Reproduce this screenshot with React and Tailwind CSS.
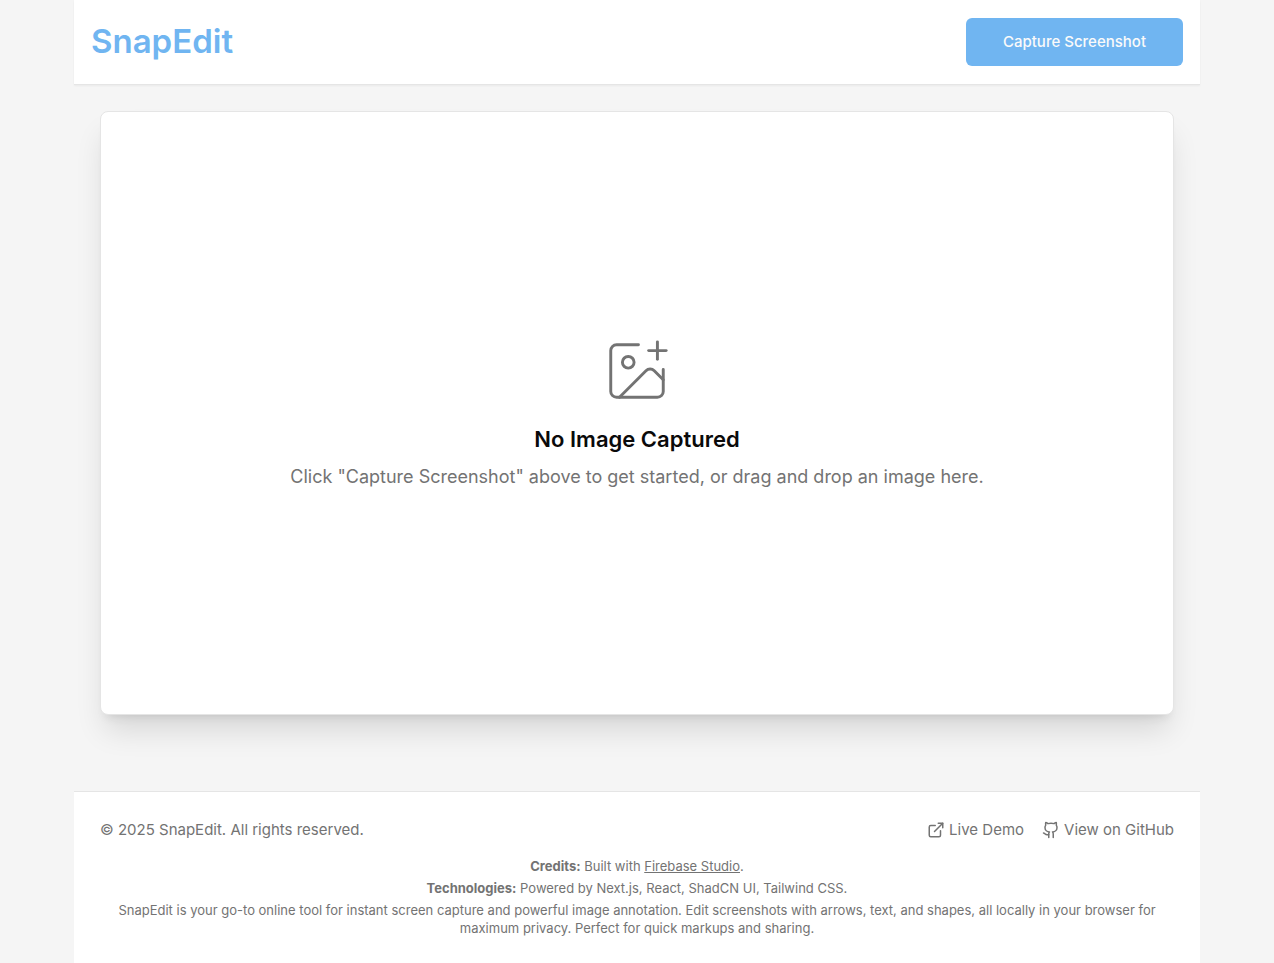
import { ExternalLink, Github, ImagePlus } from "lucide-react";

export default function App() {
  return (
    <div className="min-h-screen bg-[#f5f5f5] font-['Inter',sans-serif] text-[#0a0a0a]">
      <div className="mx-auto flex min-h-screen max-w-[1126px] flex-col">
        <header className="flex items-start justify-between border-b border-[#e5e5e5] bg-white px-[17px] py-[18px] shadow-xs">
          <h1 className="text-[33px] leading-[46px] font-semibold text-[#70b5f1]">SnapEdit</h1>
          <button
            type="button"
            className="h-12 rounded-md bg-[#70b5f1] px-[37px] text-[15px] leading-6 font-medium text-[#fafafa]"
          >
            Capture Screenshot
          </button>
        </header>
        <main className="flex flex-1 flex-col p-[26px] pb-[76px]">
          <section className="flex flex-1 flex-col items-center justify-center rounded-lg border border-[#e5e5e5] bg-white pt-0.5 text-center shadow-[0_20px_30px_-5px_rgb(0_0_0/0.12),0_8px_10px_-6px_rgb(0_0_0/0.1)]">
            <ImagePlus className="mb-[18px] size-[70px] text-[#737373]" strokeWidth={1} />
            <h2 className="mb-2 text-[22px] leading-[30px] font-semibold">No Image Captured</h2>
            <p className="text-[18px] leading-[30px] text-[#737373]">
              Click "Capture Screenshot" above to get started, or drag and drop an image here.
            </p>
          </section>
        </main>
        <footer className="border-t border-[#e5e5e5] bg-white p-[26px] text-[#737373]">
          <div className="flex items-center justify-between text-[15px] leading-6">
            <p>© 2025 SnapEdit. All rights reserved.</p>
            <nav className="flex items-center gap-[18px]">
              <a href="#demo" className="flex items-center gap-1">
                <ExternalLink className="size-[18px]" />
                Live Demo
              </a>
              <a href="#github" className="flex items-center gap-1">
                <Github className="size-[18px]" />
                View on GitHub
              </a>
            </nav>
          </div>
          <div className="mt-[15px] space-y-1 text-center text-[13px] leading-[18px]">
            <p>
              <strong className="font-bold">Credits:</strong> Built with{" "}
              <a href="#studio" className="underline">
                Firebase Studio
              </a>
              .
            </p>
            <p>
              <strong className="font-bold">Technologies:</strong> Powered by Next.js, React, ShadCN UI, Tailwind
              CSS.
            </p>
            <p>
              SnapEdit is your go-to online tool for instant screen capture and powerful image annotation. Edit
              screenshots with arrows, text, and shapes, all locally in your browser for maximum privacy. Perfect for
              quick markups and sharing.
            </p>
          </div>
        </footer>
      </div>
    </div>
  );
}
